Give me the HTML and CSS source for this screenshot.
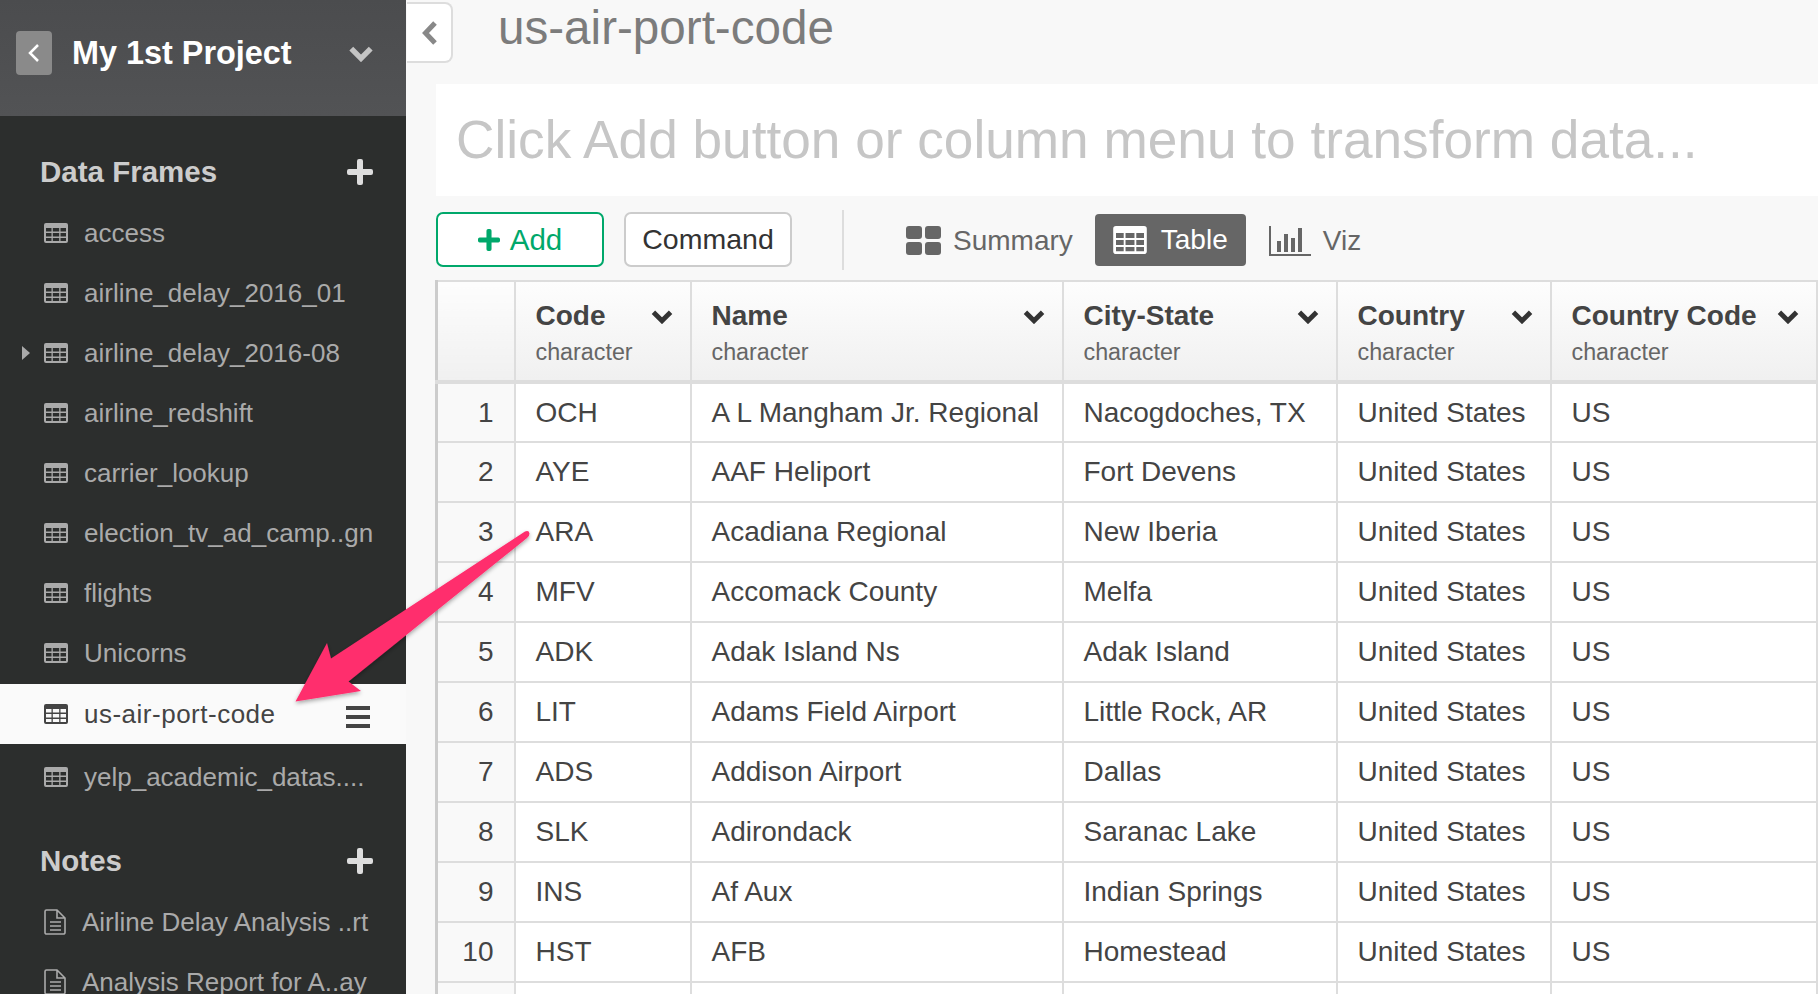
FILE: index.html
```html
<!DOCTYPE html>
<html lang="en">

<head>
  <meta charset="UTF-8">
  <title>us-air-port-code</title>
  <link rel="stylesheet" href="styles.css">
</head>

<body>
  <svg class="defs" width="0" height="0">
    <symbol id="i-table" viewBox="0 0 24 20">
      <path fill="currentColor" fill-rule="evenodd" d="M2 0h20a2 2 0 0 1 2 2v16a2 2 0 0 1-2 2H2a2 2 0 0 1-2-2V2a2 2 0 0 1 2-2zM2 5v3.500h5.500V5zM8.800 5v3.500h6.400V5zM16.500 5v3.500H22V5zM2 10v3.500h5.500V10zM8.800 10v3.500h6.400V10zM16.500 10v3.500H22V10zM2 15v3h5.500v-3zM8.800 15v3h6.400v-3zM16.500 15v3H22v-3z" />
    </symbol>
    <symbol id="i-note" viewBox="0 0 22 26">
      <path fill="none" stroke="currentColor" stroke-width="1.600" d="M1 2.500a1.500 1.500 0 0 1 1.500-1.500H13l8 8v14.500a1.500 1.500 0 0 1-1.500 1.500h-17A1.500 1.500 0 0 1 1 23.500zM13 1v8h8M6 13h11M6 17h11M6 21h11" />
    </symbol>
    <symbol id="i-plus" viewBox="0 0 26 26">
      <path fill="currentColor" d="M10 2a2 2 0 0 1 2-2h2a2 2 0 0 1 2 2v8h8a2 2 0 0 1 2 2v2a2 2 0 0 1-2 2h-8v8a2 2 0 0 1-2 2h-2a2 2 0 0 1-2-2v-8H2a2 2 0 0 1-2-2v-2a2 2 0 0 1 2-2h8z" />
    </symbol>
    <symbol id="i-down" viewBox="0 0 20 14">
      <path fill="none" stroke="currentColor" stroke-width="4.500" d="M2 3l8 8 8-8" />
    </symbol>
  </svg>

  <aside class="sidebar">
    <header class="project">
      <span class="project-back">
        <svg width="12" height="20" viewBox="0 0 12 20"><path fill="none" stroke="#fff" stroke-width="2.500" d="M10 2l-8 8 8 8" /></svg>
      </span>
      <span class="project-name">My 1st Project</span>
      <svg class="project-down" width="26" height="17"><use href="#i-down" /></svg>
    </header>

    <div class="side-head">
      <span>Data Frames</span>
      <svg width="26" height="26"><use href="#i-plus" /></svg>
    </div>
    <ul class="side-list">
      <li><svg class="i-row" width="24" height="20"><use href="#i-table" /></svg>access</li>
      <li><svg class="i-row" width="24" height="20"><use href="#i-table" /></svg>airline_delay_2016_01</li>
      <li><i class="caret"></i><svg class="i-row" width="24" height="20"><use href="#i-table" /></svg>airline_delay_2016-08</li>
      <li><svg class="i-row" width="24" height="20"><use href="#i-table" /></svg>airline_redshift</li>
      <li><svg class="i-row" width="24" height="20"><use href="#i-table" /></svg>carrier_lookup</li>
      <li><svg class="i-row" width="24" height="20"><use href="#i-table" /></svg>election_tv_ad_camp..gn</li>
      <li><svg class="i-row" width="24" height="20"><use href="#i-table" /></svg>flights</li>
      <li><svg class="i-row" width="24" height="20"><use href="#i-table" /></svg>Unicorns</li>
      <li class="active">
        <svg class="i-row" width="24" height="20"><use href="#i-table" /></svg>us-air-port-code
        <span class="burger"><b></b><b></b><b></b></span>
      </li>
      <li><svg class="i-row" width="24" height="20"><use href="#i-table" /></svg>yelp_academic_datas....</li>
    </ul>

    <div class="side-head notes-head">
      <span>Notes</span>
      <svg width="26" height="26"><use href="#i-plus" /></svg>
    </div>
    <ul class="side-list notes">
      <li><svg class="i-row" width="22" height="26"><use href="#i-note" /></svg>Airline Delay Analysis ..rt</li>
      <li><svg class="i-row" width="22" height="26"><use href="#i-note" /></svg>Analysis Report for A..ay</li>
    </ul>
  </aside>

  <main class="main">
    <div class="titlebar">
      <span class="collapse">
        <svg width="15" height="24" viewBox="0 0 15 24"><path fill="none" stroke="#888" stroke-width="5" d="M13 2L3.500 12l9.500 10" /></svg>
      </span>
      <h1>us-air-port-code</h1>
    </div>

    <div class="steps">Click Add button or column menu to transform data...</div>

    <div class="toolbar">
      <button class="btn btn-add"><svg width="22" height="22"><use href="#i-plus" /></svg>Add</button>
      <button class="btn btn-command">Command</button>
      <span class="divider"></span>
      <span class="view view-summary">
        <svg width="35" height="29" viewBox="0 0 35 29"><g fill="#666"><rect width="16" height="13" rx="3" /><rect x="19" width="16" height="13" rx="3" /><rect y="16" width="16" height="13" rx="3" /><rect x="19" y="16" width="16" height="13" rx="3" /></g></svg>
        Summary
      </span>
      <span class="view view-table">
        <svg width="34" height="28"><use href="#i-table" /></svg>
        Table
      </span>
      <span class="view view-viz">
        <svg width="42" height="30" viewBox="0 0 42 30"><path fill="none" stroke="#666" stroke-width="2" d="M1 0v29h41" /><g fill="#666"><rect x="8" y="15" width="4" height="11" /><rect x="15" y="8" width="4" height="18" /><rect x="22" y="12" width="4" height="14" /><rect x="29" y="2" width="4" height="24" /></g></svg>
        Viz
      </span>
    </div>

    <table class="grid">
      <colgroup>
        <col class="c-num"><col class="c-code"><col class="c-name"><col class="c-city"><col class="c-country"><col class="c-cc">
      </colgroup>
      <thead>
        <tr>
          <th></th>
          <th><div class="th-row">Code<svg width="20" height="14"><use href="#i-down" /></svg></div><small>character</small></th>
          <th><div class="th-row">Name<svg width="20" height="14"><use href="#i-down" /></svg></div><small>character</small></th>
          <th><div class="th-row">City-State<svg width="20" height="14"><use href="#i-down" /></svg></div><small>character</small></th>
          <th><div class="th-row">Country<svg width="20" height="14"><use href="#i-down" /></svg></div><small>character</small></th>
          <th><div class="th-row">Country Code<svg width="20" height="14"><use href="#i-down" /></svg></div><small>character</small></th>
        </tr>
      </thead>
      <tbody>
        <tr><td>1</td><td>OCH</td><td>A L Mangham Jr. Regional</td><td>Nacogdoches, TX</td><td>United States</td><td>US</td></tr>
        <tr><td>2</td><td>AYE</td><td>AAF Heliport</td><td>Fort Devens</td><td>United States</td><td>US</td></tr>
        <tr><td>3</td><td>ARA</td><td>Acadiana Regional</td><td>New Iberia</td><td>United States</td><td>US</td></tr>
        <tr><td>4</td><td>MFV</td><td>Accomack County</td><td>Melfa</td><td>United States</td><td>US</td></tr>
        <tr><td>5</td><td>ADK</td><td>Adak Island Ns</td><td>Adak Island</td><td>United States</td><td>US</td></tr>
        <tr><td>6</td><td>LIT</td><td>Adams Field Airport</td><td>Little Rock, AR</td><td>United States</td><td>US</td></tr>
        <tr><td>7</td><td>ADS</td><td>Addison Airport</td><td>Dallas</td><td>United States</td><td>US</td></tr>
        <tr><td>8</td><td>SLK</td><td>Adirondack</td><td>Saranac Lake</td><td>United States</td><td>US</td></tr>
        <tr><td>9</td><td>INS</td><td>Af Aux</td><td>Indian Springs</td><td>United States</td><td>US</td></tr>
        <tr><td>10</td><td>HST</td><td>AFB</td><td>Homestead</td><td>United States</td><td>US</td></tr>
        <tr><td></td><td></td><td></td><td></td><td></td><td></td></tr>
      </tbody>
    </table>
  </main>

  <!-- annotation drawn over the page -->
  <svg class="arrow" width="1818" height="994" viewBox="0 0 1818 994">
    <defs>
      <filter id="arrow-shadow" x="-10%" y="-10%" width="120%" height="125%">
        <feDropShadow dx="0" dy="2" stdDeviation="2" flood-color="#000" flood-opacity="0.35" />
      </filter>
    </defs>
    <path fill="#ff2d6d" filter="url(#arrow-shadow)" d="M295.500 701.500L327 643L331 658.500L525 531.500Q529 530 529.500 533.500Q529.500 536 527 538L348.500 681.500L361 691z" />
  </svg>
</body>

</html>
```

FILE: styles.css
```css
html, body {
  margin: 0;
  height: 100%;
  overflow: hidden;
}
body {
  position: relative;
  display: flex;
  font-family: "Liberation Sans", Arial, sans-serif;
  color: #444;
  background-color: #f8f8f8;
}
ul {
  list-style: none;
  margin: 0;
  padding: 0;
}
.defs {
  position: absolute;
}

/* left column */
.sidebar {
  flex: 0 0 406px;
  background-color: #2c2e2d;
  color: #aaa;
  overflow: hidden;
}
.project {
  display: flex;
  align-items: center;
  height: 116px;
  padding: 0 32px 10px 16px;
  box-sizing: border-box;
  background: linear-gradient(#4b4c4e, #525355);
}
.project-back {
  display: flex;
  align-items: center;
  justify-content: center;
  width: 36px;
  height: 44px;
  border-radius: 4px;
  background-color: #8a8a8a;
}
.project-name {
  flex-grow: 1;
  margin-left: 20px;
  font-size: 32.4px;
  font-weight: bold;
  color: #fff;
}
.project-down {
  color: #c4c4c4;
}
.side-head {
  display: flex;
  align-items: center;
  justify-content: space-between;
  height: 60px;
  margin-top: 26px;
  padding: 0 33px 0 40px;
  font-size: 29.500px;
  font-weight: bold;
  color: #ccc;
}
.side-head svg {
  color: #ddd;
}
.notes-head {
  margin-top: 24px;
}
.side-list {
  margin-top: 1px;
  font-size: 26px;
}
.side-list li {
  position: relative;
  display: flex;
  align-items: center;
  height: 60px;
  padding-left: 44px;
  white-space: nowrap;
}
.i-row {
  flex-shrink: 0;
  margin-right: 16px;
}
.side-list li.active {
  margin: 1px 0 3px;
  background-color: #fafafa;
  color: #444;
  letter-spacing: 0.5px;
}
.caret {
  position: absolute;
  left: 22px;
  border-left: 8px solid #aaa;
  border-top: 7px solid transparent;
  border-bottom: 7px solid transparent;
}
.burger {
  position: absolute;
  left: 346px;
  top: 22px;
  display: flex;
  flex-direction: column;
  gap: 5px;
}
.burger b {
  display: block;
  width: 24px;
  height: 4px;
  background-color: #444;
}

/* right column */
.main {
  flex: 1 1 0;
  min-width: 0;
}
.titlebar {
  display: flex;
  align-items: flex-start;
  height: 84px;
}
.collapse {
  display: flex;
  align-items: center;
  justify-content: center;
  width: 44px;
  height: 57px;
  margin: 2px 0 0 1px;
  border: 2px solid #ddd;
  border-left: 0;
  border-radius: 0 8px 8px 0;
  background-color: #fff;
}
h1 {
  margin: 3px 0 0 45px;
  font-size: 47.600px;
  font-weight: normal;
  line-height: 50px;
  color: #7c7c7c;
}
.steps {
  height: 112px;
  margin-left: 30px;
  padding-left: 20px;
  background-color: #fff;
  font-size: 53.200px;
  line-height: 112px;
  color: #c6c6c6;
  white-space: nowrap;
}
.toolbar {
  display: flex;
  align-items: center;
  height: 84px;
  margin-left: 30px;
  box-sizing: border-box;
  padding-top: 3px;
}
.btn {
  height: 55px;
  width: 168px;
  border-radius: 7px;
  background-color: #fff;
  font-family: inherit;
  font-size: 28.500px;
  cursor: pointer;
}
.btn-add {
  display: flex;
  align-items: center;
  justify-content: center;
  gap: 10px;
  border: 2px solid #00a86b;
  color: #00a86b;
  font-size: 29.500px;
}
.btn-command {
  margin-left: 20px;
  border: 2px solid #ccc;
  color: #333;
}
.divider {
  width: 2px;
  height: 60px;
  margin: 0 62px 0 50px;
  background-color: #ddd;
}
.view {
  display: flex;
  align-items: center;
  gap: 12px;
  padding-top: 2px;
  font-size: 28px;
  color: #666;
}
.view-table {
  height: 52px;
  margin-left: 22px;
  padding: 0 18px;
  gap: 14px;
  border-radius: 4px;
  background-color: #666;
  color: #fff;
}
.view-viz {
  margin-left: 23px;
}

/* data grid */
.grid {
  table-layout: fixed;
  width: 1380px;
  margin-left: 29px;
  border-collapse: collapse;
  font-size: 28px;
}
.c-num { width: 78px; }
.c-code { width: 176px; }
.c-name { width: 372px; }
.c-city { width: 274px; }
.c-country { width: 214px; }
.c-cc { width: 266px; }
.grid th {
  height: 101px;
  padding: 4px 17px 0 20px;
  box-sizing: border-box;
  border: 2px solid #ddd;
  border-bottom: 4px solid #ddd;
  background: linear-gradient(#fdfdfd, #f0f0f0);
  text-align: left;
  font-weight: normal;
}
.th-row {
  display: flex;
  align-items: center;
  justify-content: space-between;
  font-weight: bold;
}
.th-row svg {
  width: 22px;
  height: 15px;
  color: #333;
}
.grid small {
  display: block;
  margin-top: 7px;
  font-size: 23.300px;
  color: #666;
}
.grid td {
  height: 60px;
  padding: 0 20px;
  box-sizing: border-box;
  border: 2px solid #ddd;
  background-color: #fff;
  white-space: nowrap;
}
.grid th:first-child,
.grid td:first-child {
  border-left: 3px solid #ccc;
}
.grid td:first-child {
  background-color: #f9f9f9;
  text-align: right;
}

.arrow {
  position: absolute;
  left: 0;
  top: 0;
  pointer-events: none;
}
```
